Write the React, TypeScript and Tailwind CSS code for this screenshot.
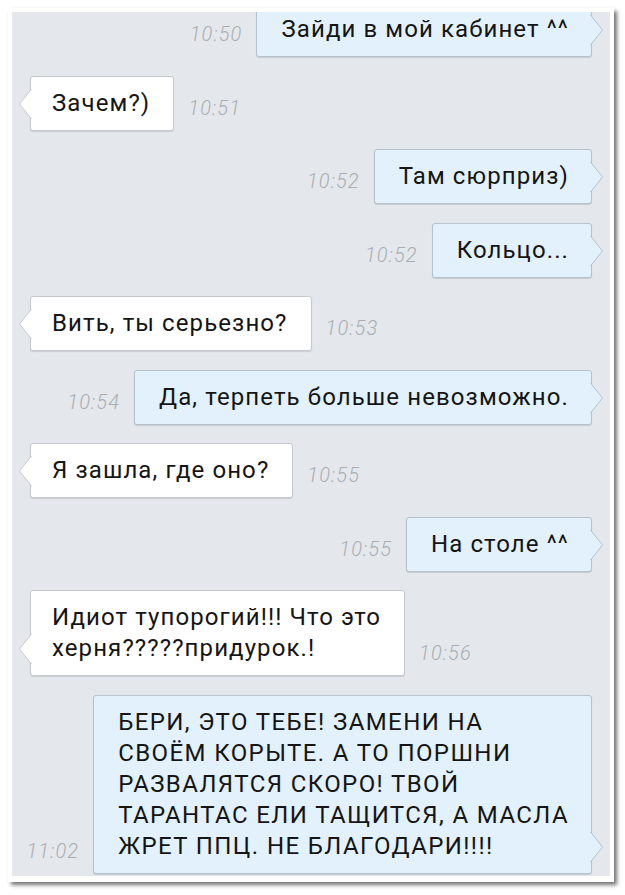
import React from "react";

type Msg = {
  side: "in" | "out";
  time: string;
  lines: string[];
};

const messages: Msg[] = [
  { side: "out", time: "10:50", lines: ["Зайди в мой кабинет ^^"] },
  { side: "in", time: "10:51", lines: ["Зачем?)"] },
  { side: "out", time: "10:52", lines: ["Там сюрприз)"] },
  { side: "out", time: "10:52", lines: ["Кольцо..."] },
  { side: "in", time: "10:53", lines: ["Вить, ты серьезно?"] },
  { side: "out", time: "10:54", lines: ["Да, терпеть больше невозможно."] },
  { side: "in", time: "10:55", lines: ["Я зашла, где оно?"] },
  { side: "out", time: "10:55", lines: ["На столе ^^"] },
  {
    side: "in",
    time: "10:56",
    lines: ["Идиот тупорогий!!! Что это", "херня?????придурок.!"],
  },
  {
    side: "out",
    time: "11:02",
    lines: [
      "БЕРИ, ЭТО ТЕБЕ! ЗАМЕНИ НА",
      "СВОЁМ КОРЫТЕ. А ТО ПОРШНИ",
      "РАЗВАЛЯТСЯ СКОРО! ТВОЙ",
      "ТАРАНТАС ЕЛИ ТАЩИТСЯ, А МАСЛА",
      "ЖРЕТ ППЦ. НЕ БЛАГОДАРИ!!!!",
    ],
  },
];

const Styles = {
  time: "pb-[11px] text-[20px] leading-[24px] tracking-[1.1px] italic font-light text-[#a9adb2] whitespace-nowrap",
  text: "text-[24px] leading-[31px] tracking-[1.1px] text-[#151515] whitespace-nowrap",
};

function Tail({ side }: { side: "in" | "out" }) {
  if (side === "out") {
    return (
      <svg
        className="absolute left-[calc(100%-1px)] bottom-[11px]"
        width="14"
        height="30"
        viewBox="0 0 14 30"
      >
        <path d="M0.5 0 L12.5 15 L0.5 30" fill="#e2f1fb" stroke="#b3c2ce" strokeWidth="1" />
      </svg>
    );
  }
  return (
    <svg
      className="absolute right-[calc(100%-1px)] bottom-[11px]"
      width="14"
      height="30"
      viewBox="0 0 14 30"
    >
      <path d="M13.5 0 L1.5 15 L13.5 30" fill="#ffffff" stroke="#c6cacf" strokeWidth="1" />
    </svg>
  );
}

function Bubble({ msg }: { msg: Msg }) {
  const out = msg.side === "out";
  return (
    <div
      className={
        out
          ? "relative rounded-[3px] border border-[#b3c2ce] bg-[#e2f1fb] pl-6 pr-[22px] py-[11px] shadow-[0_1px_1px_rgba(0,0,0,0.12)]"
          : "relative rounded-[3px] border border-[#c6cacf] bg-white pl-[21px] pr-[23px] py-[11px] shadow-[0_1px_1px_rgba(0,0,0,0.12)]"
      }
    >
      <Tail side={msg.side} />
      {msg.lines.map((l, i) => (
        <div
          key={i}
          className={msg.lines.length > 2 ? Styles.text + " tracking-[1.4px]" : Styles.text}
        >
          {l}
        </div>
      ))}
    </div>
  );
}

function Row({ msg }: { msg: Msg }) {
  if (msg.side === "out") {
    return (
      <div className="flex items-end justify-end gap-[14px] pr-[18px]">
        <span className={Styles.time}>{msg.time}</span>
        <Bubble msg={msg} />
      </div>
    );
  }
  return (
    <div className="flex items-end justify-start gap-[14px] pl-[18px]">
      <Bubble msg={msg} />
      <span className={Styles.time}>{msg.time}</span>
    </div>
  );
}

export default function App() {
  return (
    <div
      className="w-[625px] h-[895px] bg-white pt-2 pl-2"
      style={{ fontFamily: "Roboto, 'Noto Sans', sans-serif" }}
    >
      <div className="w-[606px] bg-white pt-1 pl-1 pr-1 pb-[6px] shadow-[3px_3px_4px_rgba(0,0,0,0.55)]">
        <div className="h-[864px] overflow-hidden bg-[#e4e8ec]">
          <div className="flex flex-col gap-[18.5px] mt-[-10px]">
            {messages.map((m, i) => (
              <Row key={i} msg={m} />
            ))}
          </div>
        </div>
      </div>
    </div>
  );
}
